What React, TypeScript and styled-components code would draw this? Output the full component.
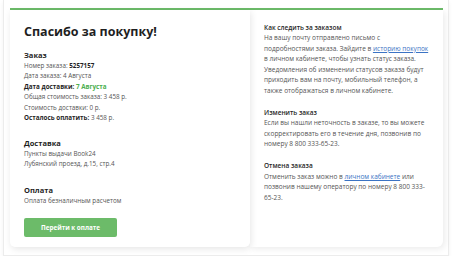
import styled, { createGlobalStyle } from "styled-components";

const COLORS = {
  green: "#6cbb69",
  greenText: "#4caf50",
  title: "#1f1f1f",
  text: "#555555",
  link: "#3b73c4",
};

const GlobalStyle = createGlobalStyle`
  body {
    margin: 0;
    background: #ffffff;
    font-family: "Open Sans", "Liberation Sans", sans-serif;
  }
`;

export default function App() {
  return (
    <>
      <GlobalStyle />
      <Frame>
        <Board>
          <OrderCard>
            <Title>Спасибо за покупку!</Title>

            <Section>
              <SectionTitle>Заказ</SectionTitle>
              <Line>
                Номер заказа: <b>5257157</b>
              </Line>
              <Line>Дата заказа: 4 Августа</Line>
              <Line>
                <b>Дата доставки:</b> <Green>7 Августа</Green>
              </Line>
              <Line>Общая стоимость заказа: 3 458 р.</Line>
              <Line>Стоимость доставки: 0 р.</Line>
              <Line>
                <b>Осталось оплатить:</b> 3 458 р.
              </Line>
            </Section>

            <Section $gap={15}>
              <SectionTitle>Доставка</SectionTitle>
              <Line>Пункты выдачи Book24</Line>
              <Line>Лубянский проезд, д.15, стр.4</Line>
            </Section>

            <Section $gap={7}>
              <SectionTitle>Оплата</SectionTitle>
              <Line>Оплата безналичным расчетом</Line>
            </Section>

            <PayButton>Перейти к оплате</PayButton>
          </OrderCard>

          <InfoPanel>
            <InfoBlock>
              <InfoTitle>Как следить за заказом</InfoTitle>
              <InfoText>
                На вашу почту отправлено письмо с<br />
                подробностями заказа. Зайдите в{" "}
                <Link href="#">историю покупок</Link>
                <br />в личном кабинете, чтобы узнать статус заказа.
                <br />
                Уведомления об изменении статусов заказа будут
                <br />
                приходить вам на почту, мобильный телефон, а<br />
                также отображаться в личном кабинете.
              </InfoText>
            </InfoBlock>
            <InfoBlock>
              <InfoTitle>Изменить заказ</InfoTitle>
              <InfoText>
                Если вы нашли неточность в заказе, то вы можете
                <br />
                скорректировать его в течение дня, позвонив по
                <br />
                номеру 8 800 333-65-23.
              </InfoText>
            </InfoBlock>
            <InfoBlock>
              <InfoTitle>Отмена заказа</InfoTitle>
              <InfoText>
                Отменить заказ можно в <Link href="#">личном кабинете</Link> или
                <br />
                позвонив нашему оператору по номеру 8 800 333-
                <br />
                65-23.
              </InfoText>
            </InfoBlock>
          </InfoPanel>
        </Board>
      </Frame>
    </>
  );
}

const Frame = styled.div`
  box-sizing: border-box;
  width: 446px;
  height: 256px;
  margin: 0 3px;
  padding: 8px 6px 0 6px;
  border: 1px solid #ececec;
  border-top: none;
  box-shadow: 0 2px 4px rgba(0, 0, 0, 0.05);
`;

const Board = styled.div`
  display: flex;
  width: 433px;
  height: 237px;
  border-top: 2px solid ${COLORS.green};
`;

const OrderCard = styled.div`
  position: relative;
  z-index: 1;
  box-sizing: border-box;
  width: 240px;
  padding: 14px 14px 0 14px;
  background: #ffffff;
  border-radius: 0 0 5px 5px;
  box-shadow: 1px 2px 7px rgba(0, 0, 0, 0.1);
`;

const Title = styled.h1`
  margin: 0 0 9.5px;
  font-size: 12.5px;
  line-height: 16px;
  font-weight: 700;
  color: ${COLORS.title};
`;

const Section = styled.div<{ $gap?: number }>`
  display: flex;
  flex-direction: column;
  margin-bottom: ${(p) => p.$gap ?? 14}px;
`;

const SectionTitle = styled.div`
  font-size: 7.5px;
  line-height: 11px;
  font-weight: 700;
  color: ${COLORS.title};
`;

const Line = styled.div`
  font-size: 6.3px;
  line-height: 10.5px;
  color: ${COLORS.text};

  b {
    font-weight: 700;
    color: ${COLORS.title};
  }
`;

const Green = styled.b`
  && {
    color: ${COLORS.greenText};
  }
`;

const PayButton = styled.button`
  width: 93px;
  height: 19px;
  padding: 0;
  border: none;
  border-radius: 2px;
  background: ${COLORS.green};
  color: #ffffff;
  font-family: inherit;
  font-size: 6.3px;
  font-weight: 700;
  cursor: pointer;
`;

const InfoPanel = styled.div`
  box-sizing: border-box;
  flex: 1;
  padding: 12.5px 8px 0 14px;
  background: #ffffff;
  border-radius: 0 0 6px 0;
  box-shadow: 2px 2px 6px rgba(0, 0, 0, 0.08);
`;

const InfoBlock = styled.div`
  margin-bottom: 11.5px;
`;

const InfoTitle = styled.div`
  font-size: 6.5px;
  line-height: 10.5px;
  font-weight: 600;
  color: ${COLORS.title};
`;

const InfoText = styled.p`
  margin: 0;
  font-size: 6.5px;
  line-height: 10.5px;
  white-space: nowrap;
  color: ${COLORS.text};
`;

const Link = styled.a`
  color: ${COLORS.link};
  text-decoration: underline;
`;
